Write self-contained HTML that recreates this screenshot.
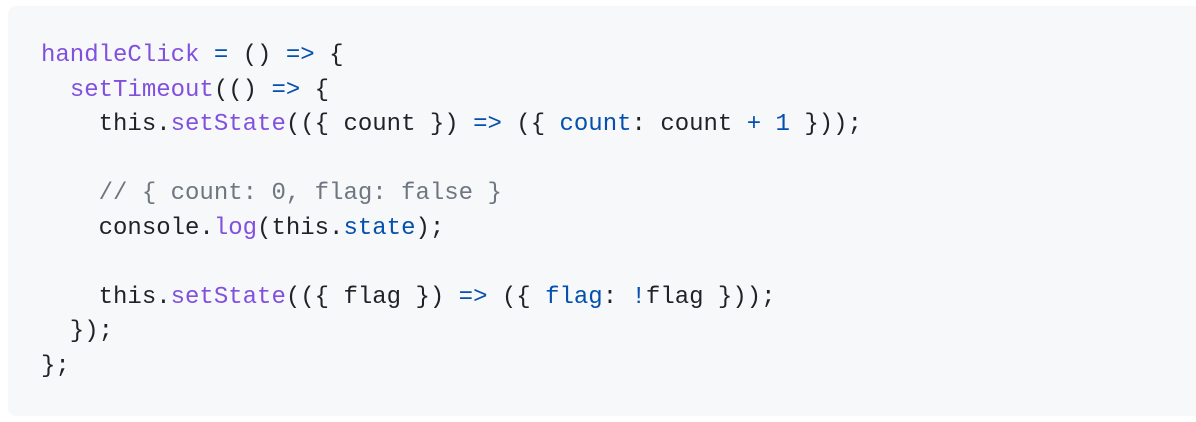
<!DOCTYPE html>
<html><head><style>
html,body{margin:0;padding:0;background:#fff;width:1196px;height:422px;overflow:hidden}
.box{position:absolute;left:8px;top:6px;width:1200px;height:410px;background:#f6f8fa;border-radius:8px}
pre{position:absolute;left:41px;top:39px;margin:0;font-family:"Liberation Mono",monospace;font-size:24px;line-height:34.5px;color:#1f2328;letter-spacing:0}
.f{color:#8250df}.k{color:#0550ae}.c{color:#6e7781}
</style></head><body>
<div class="box"></div>
<pre><span class="f">handleClick</span> <span class="k">=</span> () <span class="k">=&gt;</span> {
  <span class="f">setTimeout</span>(() <span class="k">=&gt;</span> {
    this.<span class="f">setState</span>(({ count }) <span class="k">=&gt;</span> ({ <span class="k">count</span>: count <span class="k">+</span> <span class="k">1</span> }));

    <span class="c">// { count: 0, flag: false }</span>
    console.<span class="f">log</span>(this.<span class="k">state</span>);

    this.<span class="f">setState</span>(({ flag }) <span class="k">=&gt;</span> ({ <span class="k">flag</span>: <span class="k">!</span>flag }));
  });
};</pre>
</body></html>
